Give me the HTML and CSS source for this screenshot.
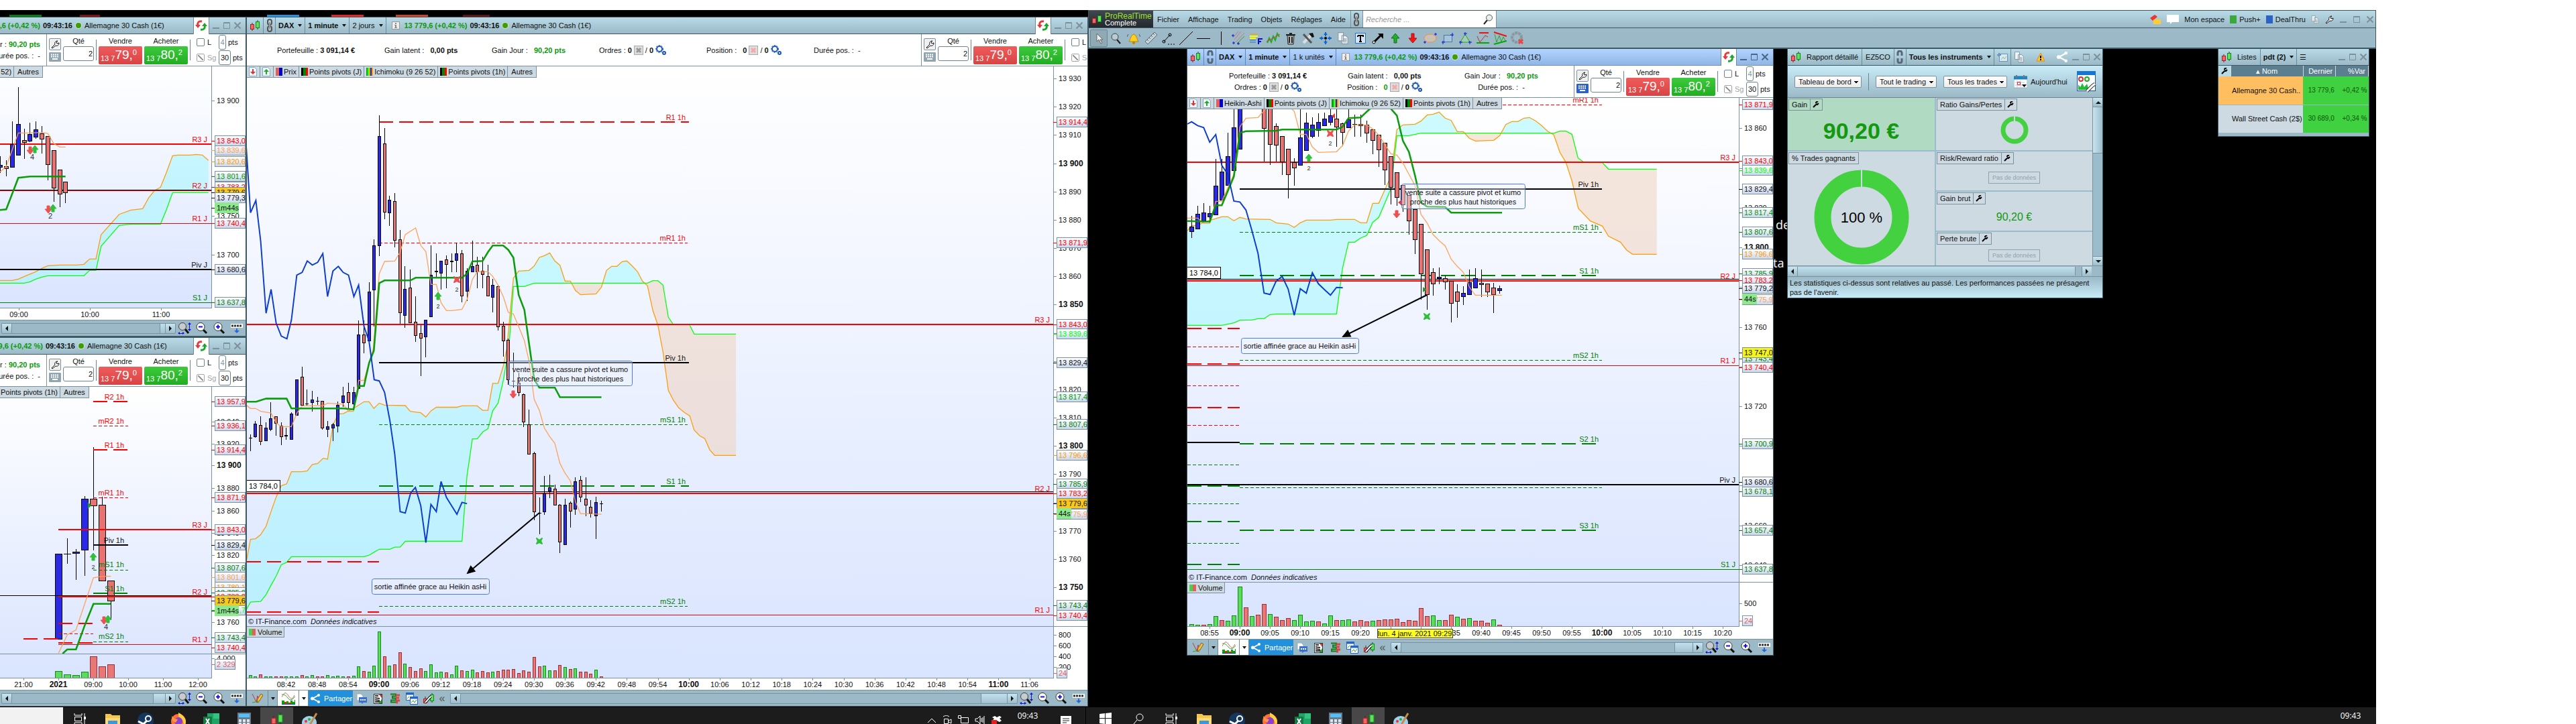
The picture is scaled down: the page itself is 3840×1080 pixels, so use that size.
FILE: index.html
```html
<!DOCTYPE html>
<html lang="fr">
<head>
<meta charset="utf-8">
<title>ProRealTime Complete</title>
<link rel="stylesheet" href="styles.css">
</head>
<body>
<svg class="sprite" aria-hidden="true">
  <symbol id="i-candles" viewBox="0 0 16 16"><path d="M4 4v12M12 0v14" stroke="#333"/><rect x="1.5" y="6.500" width="5" height="7" fill="#e66" stroke="#a22"/><rect x="9.500" y="2.500" width="5" height="9" fill="#5fe05f" stroke="#181"/></symbol>
  <symbol id="i-chain" viewBox="0 0 10 20"><rect x="2" y="1" width="6" height="8" rx="3" fill="none" stroke="#555" stroke-width="2"/><rect x="2" y="11" width="6" height="8" rx="3" fill="none" stroke="#555" stroke-width="2"/><path d="M5 5v10" stroke="#999" stroke-width="2"/></symbol>
  <symbol id="i-unchain" viewBox="0 0 10 20"><path d="M2 8V4a3 3 0 0 1 6 0v4M2 12v4a3 3 0 0 0 6 0v-4" fill="none" stroke="#56677a" stroke-width="3"/></symbol>
  <symbol id="i-info" viewBox="0 0 12 12"><rect x=".5" y=".5" width="11" height="11" fill="#eee" stroke="#999"/><path d="M5 2h2v2H5zM4 5h3v4h1v1H4V9h1V6H4z" fill="#888"/></symbol>
  <symbol id="i-refresh" viewBox="0 0 18 16"><path d="M10 2C5 1 3 4 4 8" fill="none" stroke="#e33b3b" stroke-width="3"/><path d="M0 7h8l-4 5z" fill="#e33b3b"/><path d="M8 14c5 1 7-2 6-6" fill="none" stroke="#1fa62a" stroke-width="3"/><path d="M10 9h8l-4-5z" fill="#1fa62a"/></symbol>
  <symbol id="i-wrench" viewBox="0 0 14 14"><path d="M2 12l5-5c-1-3 1-5 4-5L9 4l1 2 3-1c0 3-2 5-5 4l-5 4z" fill="#fff" stroke="#111"/></symbol>
  <symbol id="i-wrench-s" viewBox="0 0 10 10"><path d="M1 9l4-4M5 3a2 2 0 0 1 3-2M5 4l2 1 2-2" stroke="#000" stroke-width="2" fill="none"/></symbol>
  <symbol id="i-keys" viewBox="0 0 18 14"><rect width="18" height="14" rx="1" fill="currentColor"/><path d="M3 3.500h12M3 6.500h12" stroke="#fff" stroke-width="2" stroke-dasharray="2 1"/><path d="M5 10h8" stroke="#fff" stroke-width="2"/></symbol>
  <symbol id="i-cancel" viewBox="0 0 14 14"><rect x=".5" y=".5" width="13" height="13" fill="#ddd" stroke="#aaa"/><path d="M4 4l6 6M10 4l-6 6" stroke="currentColor" stroke-width="3"/></symbol>
  <symbol id="i-gears" viewBox="0 0 16 16"><circle cx="6" cy="6" r="4" fill="none" stroke="#1c56b8" stroke-width="2"/><circle cx="6" cy="6" r="5.500" fill="none" stroke="#1c56b8" stroke-width="1" stroke-dasharray="2 2"/><circle cx="13" cy="12" r="2" fill="none" stroke="#1c56b8" stroke-width="2"/></symbol>
  <symbol id="i-sheet-dn" viewBox="0 0 12 14"><path d="M.5.500h8l3 3v10H.5z" fill="#eef6fc" stroke="#8ab"/><path d="M5 3h2v4h3l-4 4-4-4h3z" fill="#d33"/></symbol>
  <symbol id="i-sheet-up" viewBox="0 0 12 14"><path d="M.5.500h8l3 3v10H.5z" fill="#eef6fc" stroke="#8ab"/><path d="M5 11h2V7h3L6 3 2 7h3z" fill="#2a2"/></symbol>
  <symbol id="i-pencil" viewBox="0 0 18 16"><path d="M1 1l6 12L9 4l3 8" fill="none" stroke="#c33"/><path d="M1 14l5-1 5 1" stroke="#2a2" fill="none"/><path d="M8 14l1-5 5-8 3 2-5 8z" fill="#f4c542" stroke="#86601a"/></symbol>
  <symbol id="i-waves" viewBox="0 0 20 18"><path d="M0 7c4-8 6-8 10-2s6 5 9-1" fill="none" stroke="#c66"/><path d="M0 3c4 0 6 1 9 5s6 4 11-2" fill="none" stroke="#2a2"/><path d="M0 18v-6h4v2h3v-1h3v2h3v-3h3v2h3v-3h1v9z" fill="#0a0"/><path d="M4 14h3v3H4zM10 15h3v2h-3z" fill="#e22"/><path d="M0 17.500h20" stroke="#22c"/></symbol>
  <symbol id="i-share" viewBox="0 0 14 14"><path d="M12 2L3 7l9 5" fill="none" stroke="#fff" stroke-width="2"/><circle cx="12" cy="2" r="2" fill="#fff"/><circle cx="2.500" cy="7" r="2.500" fill="#fff"/><circle cx="12" cy="12" r="2" fill="#fff"/></symbol>
  <symbol id="i-chat" viewBox="0 0 16 16"><path d="M1 1h6l3 3v7H1z" fill="#fff" stroke="#9ab"/><path d="M4 6h12v8h-5l-3 2v-2H4z" fill="#3a6fd8"/><path d="M6 10h8" stroke="#fff" stroke-width="2" stroke-dasharray="2 1"/></symbol>
  <symbol id="i-news" viewBox="0 0 14 16"><rect x=".5" y="1.500" width="12" height="14" fill="#fff" stroke="#333"/><path d="M2 4h5M2 7l7 1M2 10l7 1M2 13h9" stroke="#333" stroke-width="2"/><path d="M8 2h4v5z" fill="#d33"/><path d="M8 15h4V9z" fill="#2a2"/></symbol>
  <symbol id="i-book" viewBox="0 0 16 16"><path d="M1 1.500h8v3H4v3h5v3H2v3h7" fill="none" stroke="#197d19" stroke-width="2"/><path d="M9 3h6M9 7h5M9 11h6M9 14h3" stroke="#d44" stroke-width="3"/></symbol>
  <symbol id="i-wins" viewBox="0 0 18 18"><rect x=".5" y=".5" width="11" height="11" fill="#fff" stroke="#26c"/><rect x="6.500" y="6.500" width="11" height="11" fill="#fff" stroke="#26c"/><path d="M1 2h10M7 8h10" stroke="#26c" stroke-width="3"/><path d="M2 9l3-3M8 15l3-3 2 3 3-4" stroke="#2a2" fill="none"/></symbol>
  <symbol id="i-candlefix" viewBox="0 0 16 16"><path d="M13 0v14M3 5v11" stroke="#333"/><rect x="10.500" y="2.500" width="5" height="9" fill="#5fe05f" stroke="#181"/><rect x=".5" y="8.500" width="5" height="6" fill="#e66" stroke="#a22"/><path d="M3 14l7-8 2-1" stroke="#000" stroke-width="4"/><path d="M3 14l7-8 2-1" stroke="#fff" stroke-width="2"/></symbol>
  <symbol id="i-fit" viewBox="0 0 20 18"><path d="M11 10l5 6" stroke="#111" stroke-width="3"/><circle cx="7" cy="6" r="5.500" fill="#c8cbd0" stroke="#444"/><path d="M17.500 2v9M1 16.500h8" stroke="#11d" stroke-width="1"/><path d="M15 3l2.500-3L20 3zM15 10l2.500 3 2.500-3zM3 14v4l-3-2zM7 14v4l3-2z" fill="#11d"/></symbol>
  <symbol id="i-out" viewBox="0 0 18 18"><path d="M11 11l5 5" stroke="#111" stroke-width="3"/><circle cx="7" cy="6.500" r="6" fill="#fff" stroke="#333"/><path d="M4 6.500h6" stroke="#11d" stroke-width="2"/></symbol>
  <symbol id="i-in" viewBox="0 0 18 18"><path d="M11 11l5 5" stroke="#111" stroke-width="3"/><circle cx="7" cy="6.500" r="6" fill="#fff" stroke="#333"/><path d="M4 6.500h6M7 3.500v6" stroke="#11d" stroke-width="2"/></symbol>
  <symbol id="i-rows" viewBox="0 0 18 14"><rect width="18" height="6" fill="#fff"/><path d="M1 3h16" stroke="#333" stroke-width="3" stroke-dasharray="3 1"/><path d="M8 7h2v3h3l-4 4-4-4h3z" fill="#2467d6"/></symbol>
  <symbol id="i-min" viewBox="0 0 12 12"><path d="M1 10h10" stroke="currentColor" stroke-width="2"/></symbol>
  <symbol id="i-max" viewBox="0 0 12 12"><path d="M1.500 1.500h9v9h-9zM1 2.500h10" stroke="currentColor" fill="none"/></symbol>
  <symbol id="i-close" viewBox="0 0 12 12"><path d="M1.500 1.500l9 9M10.500 1.500l-9 9" stroke="currentColor" stroke-width="2"/></symbol>
  <symbol id="i-copy" viewBox="0 0 16 18"><path d="M1.500 1.500h7v11h-7zM6.500 5.500h5l3 3v8h-8z" fill="#eef3f5" stroke="#8a9aa4"/><path d="M8 10h5M8 12h5M8 14h5" stroke="#8a9aa4"/></symbol>
  <symbol id="i-search" viewBox="0 0 16 16"><path d="M7 9l-5 6" stroke="#222" stroke-width="2"/><circle cx="10" cy="5.500" r="4.500" fill="#e9eef0" stroke="#555"/></symbol>
  <symbol id="i-folder" viewBox="0 0 24 24"><path d="M1 2h8l2 2h12v18H1z" fill="#f5c64a"/><path d="M1 8h22v15H1z" fill="#fcd975"/><rect x="5" y="12" width="14" height="12" fill="#3a96dd"/></symbol>
  <symbol id="i-steam" viewBox="0 0 24 24"><circle cx="12" cy="12" r="12" fill="#14365f"/><circle cx="16" cy="9" r="4" fill="none" stroke="#fff" stroke-width="2"/><path d="M1 13l8 4 5-5" stroke="#fff" stroke-width="3" fill="none"/></symbol>
  <symbol id="i-fox" viewBox="0 0 24 24"><circle cx="12" cy="13" r="11" fill="#ff7139"/><path d="M12 0c6 3 11 8 11 14a11 11 0 0 1-4 8c2-8-1-13-7-16z" fill="#ffd23e"/><circle cx="12" cy="13" r="6" fill="#8a3fd0"/><path d="M2 5l4 4 5 1-3 5-5-3z" fill="#ff9640"/></symbol>
  <symbol id="i-excel" viewBox="0 0 24 24"><path d="M6 1h18v22H6z" fill="#21a366"/><path d="M15 1h9v8h-9z" fill="#33c481"/><path d="M0 6h13v14H0z" fill="#107c41"/><path d="M4 9l5 8M9 9l-5 8" stroke="#fff" stroke-width="2"/></symbol>
  <symbol id="i-calc" viewBox="0 0 20 26"><rect width="20" height="26" fill="#6d7b8a"/><rect x="2" y="2" width="16" height="5" fill="#4cc2ff"/><path d="M2 12h16M2 17h16M2 22h16" stroke="#dfe6ec" stroke-width="4" stroke-dasharray="4 2"/></symbol>
  <symbol id="i-paint" viewBox="0 0 24 26"><ellipse cx="11" cy="15" rx="11" ry="10" fill="#9fd0ee"/><circle cx="6" cy="13" r="2" fill="#e33"/><circle cx="11" cy="10" r="2" fill="#3a3"/><circle cx="5" cy="18" r="2" fill="#fa3"/><path d="M12 18L22 1" stroke="#c98a4b" stroke-width="3"/></symbol>
  <symbol id="i-taskview" viewBox="0 0 18 18"><path d="M1 1v3h11V1M1.500 6.500h10v6h-10zM1 18v-3h11v3M16 1v17" fill="none" stroke="#fff"/><rect x="15" y="6" width="3" height="4" fill="#fff"/></symbol>
  <symbol id="i-win" viewBox="0 0 18 18"><path d="M0 2l8-1v7H0zM9 1l9-1v8H9zM0 9h8v8l-8-1zM9 9h9v9l-9-1z" fill="#fff"/></symbol>
</svg>

<template id="ticket-template">
  <div class="ticket-tools">
    <button class="tool-btn" type="button" aria-label="Configurer"><svg width="14" height="14"><use href="#i-wrench"/></svg></button>
    <button class="key-btn" type="button" aria-label="Clavier"><svg width="18" height="14"><use href="#i-keys"/></svg></button>
  </div>
  <label class="qty">Qté<input class="field" value="2"></label>
  <span class="rule"></span>
  <div class="deal"><span>Vendre</span><button class="price sell" type="button"><span class="price-lead">13 7</span><span class="price-main">79,</span><span class="price-tick">0</span></button></div>
  <div class="deal"><span>Acheter</span><button class="price buy" type="button"><span class="price-lead">13 7</span><span class="price-main">80,</span><span class="price-tick">2</span></button></div>
  <span class="rule"></span>
  <div class="stops">
    <div class="stop"><label class="stop-name"><input type="checkbox">L</label><label><input class="field narrow" value="4" aria-label="Limite"> pts</label></div>
    <div class="stop"><label class="stop-name off"><input type="checkbox" checked disabled>Sg</label><label><input class="field wide" value="30" aria-label="Stop garanti"> pts</label></div>
  </div>
</template>
<template id="controls-template">
  <span class="sync"><svg width="18" height="16"><use href="#i-refresh"/></svg></span>
  <button class="ctl" type="button" aria-label="Réduire"><svg width="12" height="12"><use href="#i-min"/></svg></button>
  <button class="ctl" type="button" aria-label="Agrandir"><svg width="12" height="12"><use href="#i-max"/></svg></button>
  <button class="ctl" type="button" aria-label="Fermer"><svg width="12" height="12"><use href="#i-close"/></svg></button>
</template>
<template id="tools-template">
  <button class="bar-btn pen" type="button" aria-label="Dessiner"><svg width="18" height="16"><use href="#i-pencil"/></svg></button>
  <button class="bar-btn drop" type="button" aria-label="Outils"><i class="caret"></i></button>
  <button class="bar-btn pen lit" type="button" aria-label="Indicateurs"><svg width="20" height="18"><use href="#i-waves"/></svg></button>
  <button class="bar-btn drop lit" type="button" aria-label="Liste des indicateurs"><i class="caret"></i></button>
  <button class="bar-btn share" type="button"><svg width="14" height="14"><use href="#i-share"/></svg>Partager</button>
  <button class="bar-btn ico" type="button" aria-label="Messages"><svg width="16" height="16"><use href="#i-chat"/></svg></button>
  <button class="bar-btn ico" type="button" aria-label="Actualités"><svg width="14" height="16"><use href="#i-news"/></svg></button>
  <button class="bar-btn ico" type="button" aria-label="Carnet"><svg width="16" height="16"><use href="#i-book"/></svg></button>
  <button class="bar-btn ico" type="button" aria-label="Fenêtres"><svg width="18" height="18"><use href="#i-wins"/></svg></button>
  <button class="bar-btn ico" type="button" aria-label="Style"><svg width="16" height="16"><use href="#i-candlefix"/></svg></button>
  <span class="less">«</span>
</template>
<template id="scroll-template">
  <div class="scroller"><button type="button" class="arrow" aria-label="Gauche"><i class="tri left"></i></button><span class="track"><span class="thumb"></span></span><button type="button" class="arrow" aria-label="Droite"><i class="tri right"></i></button></div>
  <button class="bar-btn ico" type="button" aria-label="Ajuster"><svg width="20" height="18"><use href="#i-fit"/></svg></button>
  <button class="bar-btn ico" type="button" aria-label="Dézoomer"><svg width="18" height="18"><use href="#i-out"/></svg></button>
  <button class="bar-btn ico" type="button" aria-label="Zoomer"><svg width="18" height="18"><use href="#i-in"/></svg></button>
  <button class="bar-btn ico" type="button" aria-label="Lignes"><svg width="18" height="14"><use href="#i-rows"/></svg></button>
</template>

<main class="desktop">
  <div class="under">
    <span class="scrap s1"></span><span class="scrap s2"></span><span class="scrap s3"></span><span class="scrap s4"></span><span class="scrap s5"></span><span class="scrap s6"></span>
    <span class="behind b1">de</span><span class="behind b2">ta</span>
  </div>

  <section class="window chart-a" aria-label="DAX 5 minutes">
    <header class="title"><b class="up">13 779,6 (+0,42 %)</b><b>09:43:16</b><i class="dot"></i><span>Allemagne 30 Cash (1€)</span><span class="controls" data-fill="controls-template"></span></header>
    <div class="trade"><div class="account two short"><p>Gain Jour : <b class="up">90,20 pts</b></p><p>Durée pos. : &nbsp;-</p></div><div class="ticket" data-fill="ticket-template"></div></div>
    <div class="plot"><div class="legend"><span>Ichimoku (9 26 52)</span><span>Autres</span></div><svg id="chart-a" viewBox="-44 99 410 378"></svg></div>
    <footer class="bar" data-fill="scroll-template"></footer>
  </section>

  <section class="window chart-b" aria-label="DAX 15 minutes">
    <header class="title"><b class="up">13 779,6 (+0,42 %)</b><b>09:43:16</b><i class="dot"></i><span>Allemagne 30 Cash (1€)</span><span class="controls" data-fill="controls-template"></span></header>
    <div class="trade"><div class="account two short"><p>Gain Jour : <b class="up">90,20 pts</b></p><p>Durée pos. : &nbsp;-</p></div><div class="ticket" data-fill="ticket-template"></div></div>
    <div class="plot"><div class="legend"><span>Points pivots (1h)</span><span>Autres</span></div><svg id="chart-b" viewBox="-44 577 410 452"></svg></div>
    <footer class="bar" data-fill="scroll-template"></footer>
  </section>

  <section class="window chart-c" aria-label="DAX 1 minute">
    <header class="title">
      <span class="seg icon"><svg width="16" height="16"><use href="#i-candles"/></svg></span><span class="seg link"><svg width="10" height="20"><use href="#i-chain"/></svg></span>
      <button class="seg pick" type="button"><b>DAX</b><i class="caret"></i></button><button class="seg pick" type="button"><b>1 minute</b><i class="caret"></i></button><button class="seg pick" type="button">2 jours<i class="caret"></i></button>
      <svg class="info" width="12" height="12"><use href="#i-info"/></svg><b class="up">13 779,6 (+0,42 %)</b><b>09:43:16</b><i class="dot"></i><span>Allemagne 30 Cash (1€)</span>
      <span class="controls" data-fill="controls-template"></span>
    </header>
    <div class="trade">
      <div class="account one">
        <p>Portefeuille : <b>3 091,14 €</b></p><p>Gain latent : &nbsp;<b>0,00 pts</b></p><p>Gain Jour : &nbsp;<b class="up">90,20 pts</b></p>
        <p>Ordres : <b>0</b><svg class="grey" width="14" height="14"><use href="#i-cancel"/></svg> / <b>0</b><svg width="16" height="16"><use href="#i-gears"/></svg></p>
        <p>Position : &nbsp;<b>0</b><svg class="pale" width="14" height="14"><use href="#i-cancel"/></svg> / <b>0</b><svg width="16" height="16"><use href="#i-gears"/></svg></p>
        <p>Durée pos. : &nbsp;-</p>
      </div>
      <div class="ticket" data-fill="ticket-template"></div>
    </div>
    <div class="plot">
      <div class="legend"><span class="page"><svg width="12" height="14"><use href="#i-sheet-dn"/></svg></span><span class="page"><svg width="12" height="14"><use href="#i-sheet-up"/></svg></span><span><i class="key price-key"></i>Prix</span><span><i class="key pivot-key"></i>Points pivots (J)</span><span><i class="key ichi-key"></i>Ichimoku (9 26 52)</span><span><i class="key pivot-key"></i>Points pivots (1h)</span><span>Autres</span></div>
      <svg id="chart-c" viewBox="368 99 1253 930"></svg>
    </div>
    <footer class="bar"><span class="bar-tools" data-fill="tools-template"></span><span class="bar-scroll" data-fill="scroll-template"></span></footer>
  </section>

  <section class="app" aria-label="ProRealTime">
    <nav class="menubar">
      <div class="brand"><svg width="16" height="16"><use href="#i-candles"/></svg><p><strong>ProRealTime</strong><br>Complete</p></div>
      <a href="#fichier">Fichier</a><a href="#affichage">Affichage</a><a href="#trading">Trading</a><a href="#objets">Objets</a><a href="#reglages">Réglages</a><a href="#aide">Aide</a>
      <span class="chainbox"><svg width="10" height="20"><use href="#i-chain"/></svg></span>
      <label class="search"><input type="search" placeholder="Recherche ..." aria-label="Recherche"><svg width="16" height="16"><use href="#i-search"/></svg></label>
      <div class="menu-right">
        <svg width="18" height="16" viewBox="0 0 18 16"><path d="M1 6l7-5 4 3-7 6z" fill="#e33"/><path d="M6 8h11v7H6z" fill="#fc3"/></svg>
        <svg width="18" height="14" viewBox="0 0 18 14"><path d="M0 0h18v11H8l-3 3v-3H0z" fill="#fff"/></svg>
        <a href="#espace">Mon espace</a>
        <a href="#push"><i class="sq green"></i>Push+</a><a href="#deal"><i class="sq blue"></i>DealThru</a>
        <svg width="12" height="14"><use href="#i-copy"/></svg><svg width="14" height="14"><use href="#i-wrench"/></svg>
        <button class="ctl" type="button" aria-label="Réduire"><svg width="12" height="12"><use href="#i-min"/></svg></button><button class="ctl" type="button" aria-label="Agrandir"><svg width="12" height="12"><use href="#i-max"/></svg></button><button class="ctl" type="button" aria-label="Fermer"><svg width="12" height="12"><use href="#i-close"/></svg></button>
      </div>
    </nav>
    <div class="drawbar">
      <button class="on" type="button" aria-label="Pointeur"><svg viewBox="0 0 20 20"><path d="M7 3v12l3-3 3 6 2-1-3-5h4z" fill="#eee" stroke="#666"/></svg></button>
      <button type="button" aria-label="Loupe"><svg viewBox="0 0 20 20"><path d="M11 12l5 6" stroke="#222" stroke-width="2"/><circle cx="8" cy="8" r="5" fill="#b7cbd3" stroke="#444"/></svg></button>
      <button type="button" aria-label="Alerte"><svg viewBox="0 0 20 20"><path d="M3 15c2-2 2-9 7-11 5 2 5 9 7 11z" fill="#ffcf1f" stroke="#b88600"/><circle cx="10" cy="17" r="2" fill="#b88600"/><path d="M2 4l-2 4M18 4l2 4" stroke="#555"/></svg></button>
      <button type="button" aria-label="Règle"><svg viewBox="0 0 20 20"><path d="M1 15L15 1l4 4L5 19z" fill="#c4d2d8" stroke="#5b6b73"/><path d="M4 12l2 2M7 9l2 2M10 6l2 2M13 3l2 2" stroke="#5b6b73"/></svg></button>
      <button type="button" aria-label="Segment"><svg viewBox="0 0 20 20"><path d="M3 15l9-10" stroke="#000"/><circle cx="3" cy="15" r="2" fill="none" stroke="#000"/><circle cx="12" cy="5" r="2" fill="none" stroke="#000"/><path d="M9 19h10" stroke="#000" stroke-dasharray="2 2"/></svg></button>
      <button type="button" aria-label="Droite"><svg viewBox="0 0 20 20"><path d="M0 20L20 0" stroke="#000"/></svg></button>
      <button type="button" aria-label="Horizontale"><svg viewBox="0 0 20 20"><path d="M0 10.500h20" stroke="#000"/></svg></button>
      <button type="button" aria-label="Verticale"><svg viewBox="0 0 20 20"><path d="M10.500 0v20" stroke="#000"/></svg></button>
      <button type="button" aria-label="Fourchette"><svg viewBox="0 0 20 20"><path d="M4 12L14 0M6 16L19 2M2 9L10 0" stroke="#c77"/><path d="M8 18L19 7" stroke="#2a2"/><path d="M0 6h4M2 4v4M1 17h4M3 15v4M8 18h4M10 16v4" stroke="#11d"/></svg></button>
      <button type="button" aria-label="Fibonacci"><svg viewBox="0 0 20 20"><path d="M1 4h12" stroke="#f90"/><path d="M1 7h12M1 10h9" stroke="#ff0" stroke-width="2"/><path d="M1 13h9M1 16h9" stroke="#27c"/><path d="M14 19V11h6M14 15h4" fill="none" stroke="#11d" stroke-width="2"/></svg></button>
      <button type="button" aria-label="Zigzag"><svg viewBox="0 0 20 20"><path d="M1 17l3-7 3 6 3-9 3 6 3-10 3 5" fill="none" stroke="#2a2" stroke-width="2"/><path d="M0 15L20 4" stroke="#c44"/></svg></button>
      <button type="button" aria-label="Supprimer"><svg viewBox="0 0 20 20"><path d="M5 6h10l-1 13H6z" fill="#bbb" stroke="#222"/><path d="M3 5h14M8 3h4M8 8v9M12 8v9" stroke="#222" stroke-width="2"/></svg></button>
      <button type="button" aria-label="Outils"><svg viewBox="0 0 20 20"><path d="M3 17L15 5" stroke="#ddd" stroke-width="4"/><path d="M3 4l12 13" stroke="#555" stroke-width="3"/><path d="M11 3l6-1 2 6-3 1z" fill="#111"/></svg></button>
      <button type="button" aria-label="Déplacer"><svg viewBox="0 0 20 20"><path d="M10 1v18M1 10h18" stroke="#16c" stroke-width="2" stroke-dasharray="6 6"/><path d="M7 5l3-4 3 4zM7 15l3 4 3-4zM5 7l-4 3 4 3zM15 7l4 3-4 3z" fill="#16c"/><circle cx="10" cy="10" r="2" fill="#000"/></svg></button>
      <button type="button" aria-label="Copier"><svg viewBox="0 0 20 20"><use href="#i-copy" width="20" height="20"/></svg></button>
      <button type="button" aria-label="Texte"><svg viewBox="0 0 20 20"><rect x="2.500" y="2.500" width="15" height="15" fill="#d7e6f6" stroke="#27c"/><path d="M6 6h8v2M6 8V6M10 6v9M8 15h4" stroke="#000" stroke-width="2" fill="none"/></svg></button>
      <button type="button" aria-label="Flèche"><svg viewBox="0 0 20 20"><path d="M5 15L15 5" stroke="#000" stroke-width="3"/><path d="M10 3h8v8z"/><circle cx="4" cy="16" r="2" fill="#fff" stroke="#000"/></svg></button>
      <button type="button" aria-label="Haut"><svg viewBox="0 0 20 20"><path d="M10 3l6 7h-4v7H8v-7H4z" fill="#1fb02a" stroke="#117018"/></svg></button>
      <button type="button" aria-label="Bas"><svg viewBox="0 0 20 20"><path d="M10 17l6-7h-4V3H8v7H4z" fill="#f11" stroke="#a11"/></svg></button>
      <button type="button" aria-label="Ellipse"><svg viewBox="0 0 20 20"><ellipse cx="10" cy="10" rx="9" ry="6" fill="#c9c0b6" stroke="#f84"/><path d="M0 16h4M2 14v4M16 4h4M18 2v4" stroke="#11d"/></svg></button>
      <button type="button" aria-label="Rectangle"><svg viewBox="0 0 20 20"><rect x="4.500" y="5.500" width="12" height="10" fill="#a7c4dc" stroke="#47a"/><path d="M1 16h5M3 14v5M14 5h5M17 2v5" stroke="#11d"/></svg></button>
      <button type="button" aria-label="Triangle"><svg viewBox="0 0 20 20"><path d="M10 4l7 12H3z" fill="#a4cdb4" stroke="#2a2"/><path d="M8 3h5M10 1v5M1 16h5M3 14v5M15 16h5M17 14v5" stroke="#11d"/></svg></button>
      <button type="button" aria-label="Supports"><svg viewBox="0 0 20 20"><path d="M5 2h14" stroke="#e11" stroke-width="2"/><path d="M1 17h19" stroke="#0a0" stroke-width="2"/><path d="M2 7l4 9 8-10 4 2" fill="none" stroke="#b33"/></svg></button>
      <button type="button" aria-label="Canal"><svg viewBox="0 0 20 20"><path d="M1 1l19 6" stroke="#e11" stroke-width="2"/><path d="M1 19l19-5" stroke="#0a0" stroke-width="2"/><path d="M2 4l3 12 4-10 3 9 3-7 3 6" fill="none" stroke="#2a2"/></svg></button>
      <button type="button" aria-label="Effacer le cercle"><svg viewBox="0 0 20 20"><circle cx="9" cy="9" r="7" fill="none" stroke="#8b979e" stroke-width="4" stroke-dasharray="4 1"/><path d="M12 12l6 6M18 12l-6 6" stroke="#e44" stroke-width="3"/></svg></button>
    </div>
  </section>

  <section class="window chart-d active" aria-label="DAX Heikin-Ashi">
    <header class="title">
      <span class="seg icon"><svg width="16" height="16"><use href="#i-candles"/></svg></span><span class="seg link"><svg width="10" height="20"><use href="#i-unchain"/></svg></span>
      <button class="seg pick" type="button"><b>DAX</b><i class="caret"></i></button><button class="seg pick" type="button"><b>1 minute</b><i class="caret"></i></button><button class="seg pick" type="button">1 k unités<i class="caret"></i></button>
      <svg class="info" width="12" height="12"><use href="#i-info"/></svg><b class="up">13 779,6 (+0,42 %)</b><b>09:43:16</b><i class="dot"></i><span>Allemagne 30 Cash (1€)</span>
      <span class="controls" data-fill="controls-template"></span>
    </header>
    <div class="trade">
      <div class="account two">
        <p>Portefeuille : <b>3 091,14 €</b></p><p>Gain latent : &nbsp;<b>0,00 pts</b></p><p>Gain Jour : &nbsp;<b class="up">90,20 pts</b></p>
        <p>Ordres : <b>0</b><svg class="grey" width="14" height="14"><use href="#i-cancel"/></svg> / <b>0</b><svg width="16" height="16"><use href="#i-gears"/></svg></p>
        <p>Position : &nbsp;<b class="up">0</b><svg class="pale" width="14" height="14"><use href="#i-cancel"/></svg> / <b>0</b><svg width="16" height="16"><use href="#i-gears"/></svg></p>
        <p>Durée pos. : &nbsp;-</p>
      </div>
      <div class="ticket" data-fill="ticket-template"></div>
    </div>
    <div class="plot">
      <div class="legend"><span class="page"><svg width="12" height="14"><use href="#i-sheet-dn"/></svg></span><span class="page"><svg width="12" height="14"><use href="#i-sheet-up"/></svg></span><span><i class="key price-key"></i>Heikin-Ashi</span><span><i class="key pivot-key"></i>Points pivots (J)</span><span><i class="key ichi-key"></i>Ichimoku (9 26 52)</span><span><i class="key pivot-key"></i>Points pivots (1h)</span><span>Autres</span></div>
      <svg id="chart-d" viewBox="1770 146 873 807"></svg>
    </div>
    <footer class="bar"><span class="bar-tools" data-fill="tools-template"></span><span class="bar-scroll" data-fill="scroll-template"></span></footer>
  </section>

  <section class="window report" aria-label="Rapport détaillé">
    <header class="title">
      <span class="seg named"><svg width="16" height="16"><use href="#i-candles"/></svg>Rapport détaillé</span><span class="seg acct">EZ5CO</span><span class="seg link"><svg width="10" height="20"><use href="#i-unchain"/></svg></span>
      <button class="seg pick" type="button"><b>Tous les instruments</b><i class="caret"></i></button>
      <span class="seg icon"><svg width="16" height="14" viewBox="0 0 16 14"><rect x="3.500" y="2.500" width="12" height="11" fill="#dbe9f3" stroke="#6a94c0"/><path d="M0 4h6M3 1v6" stroke="#6a94c0" stroke-width="2"/><path d="M6 11l3-4 2 3 3-4" fill="none" stroke="#9b8"/></svg></span>
      <span class="title-icons"><svg width="16" height="18"><use href="#i-copy"/></svg><svg width="14" height="14" viewBox="0 0 14 14"><path d="M7 1l6 12H1z" fill="#fc2" stroke="#e80"/><path d="M7 5v4M7 10v2" stroke="#000" stroke-width="2"/></svg><svg width="16" height="16"><use href="#i-share"/></svg></span>
      <button class="ctl" type="button" aria-label="Réduire"><svg width="12" height="12"><use href="#i-min"/></svg></button><button class="ctl" type="button" aria-label="Agrandir"><svg width="12" height="12"><use href="#i-max"/></svg></button><button class="ctl" type="button" aria-label="Fermer"><svg width="12" height="12"><use href="#i-close"/></svg></button>
    </header>
    <div class="filters">
      <select aria-label="Vue"><option>Tableau de bord</option></select><span class="rule"></span>
      <select aria-label="Trading"><option>Tout le trading</option></select>
      <select aria-label="Trades"><option>Tous les trades</option></select>
      <button class="today" type="button"><svg width="20" height="20" viewBox="0 0 20 20"><rect y="2" width="20" height="17" fill="#fff" stroke="#9ab"/><path d="M0 4h20" stroke="#1c84bf" stroke-width="5"/><path d="M4 0v4M15 0v4" stroke="#777" stroke-width="2"/><path d="M2 11h14M2 15h14M5 8v10M10 8v10" stroke="#bcd"/><path d="M5.500 10.500h4v4h-4z" fill="none" stroke="#e22"/><path d="M12 14h7l-3.500 4z"/></svg>Aujourd'hui</button>
      <svg width="30" height="32" viewBox="0 0 30 32"><rect x=".5" y=".5" width="27" height="29" fill="#fff" stroke="#15b"/><path d="M0 3h28" stroke="#1776cf" stroke-width="6"/><circle cx="6" cy="12" r="3" fill="none" stroke="#c33" stroke-width="2"/><circle cx="15" cy="12" r="3" fill="none" stroke="#2a2" stroke-width="2"/><path d="M2 28V20l3 4 3-6 3 6 4-5 3 9z" fill="#2b3"/><path d="M15 30l8-8 4-3" stroke="#333" stroke-width="5"/><path d="M15 30l8-8 4-3" stroke="#fff" stroke-width="3"/></svg>
    </div>
    <div class="cards-row">
      <div class="cards">
        <article class="card gain"><h3>Gain<svg width="10" height="10"><use href="#i-wrench-s"/></svg></h3><strong>90,20 €</strong></article>
        <article class="card"><h3>Ratio Gains/Pertes<svg width="10" height="10"><use href="#i-wrench-s"/></svg></h3><svg class="ring" width="42" height="42" viewBox="0 0 42 42"><circle cx="21" cy="21" r="17" fill="none" stroke="#43d140" stroke-width="7"/><path d="M21 0v8" stroke="#cddae2" stroke-width="2"/></svg></article>
        <article class="card tall"><h3 class="plain">% Trades gagnants</h3><svg class="ring" width="142" height="142" viewBox="0 0 142 142"><circle cx="71" cy="71" r="58" fill="none" stroke="#43d140" stroke-width="25"/><path d="M71 0v26" stroke="#cddae2" stroke-width="2"/><text x="71" y="79" text-anchor="middle">100 %</text></svg></article>
        <article class="card"><h3>Risk/Reward ratio<svg width="10" height="10"><use href="#i-wrench-s"/></svg></h3><span class="none">Pas de données</span></article>
        <article class="card"><h3>Gain brut<svg width="10" height="10"><use href="#i-wrench-s"/></svg></h3><span class="sum">90,20 €</span></article>
        <article class="card"><h3>Perte brute<svg width="10" height="10"><use href="#i-wrench-s"/></svg></h3><span class="none">Pas de données</span></article>
      </div>
      <div class="vscroll"><button type="button" class="arrow" aria-label="Haut"><i class="tri top"></i></button><span class="vthumb"></span><span class="vtrack"></span><button type="button" class="arrow" aria-label="Bas"><i class="tri bottom"></i></button></div>
    </div>
    <div class="hscroll"><button type="button" class="arrow" aria-label="Gauche"><i class="tri left"></i></button><span class="hthumb"></span><span class="htrack"></span><button type="button" class="arrow" aria-label="Droite"><i class="tri right"></i></button></div>
    <p class="notice">Les statistiques ci-dessus sont relatives au passé. Les performances passées ne présagent pas de l'avenir.</p>
  </section>

  <section class="window lists" aria-label="Listes">
    <header class="title"><span class="seg named"><svg width="16" height="16"><use href="#i-candles"/></svg>Listes</span><button class="seg pick" type="button"><b>pdt (2)</b><i class="caret"></i></button><span class="title-icons">☰</span><button class="ctl" type="button" aria-label="Réduire"><svg width="12" height="12"><use href="#i-min"/></svg></button><button class="ctl" type="button" aria-label="Agrandir"><svg width="12" height="12"><use href="#i-max"/></svg></button><button class="ctl" type="button" aria-label="Fermer"><svg width="12" height="12"><use href="#i-close"/></svg></button></header>
    <table class="quotes">
      <thead><tr><th class="cfg"><svg width="10" height="10"><use href="#i-wrench-s"/></svg></th><th>▴ Nom</th><th>Dernier</th><th>%Var</th></tr></thead>
      <tbody><tr class="picked"><td></td><td>Allemagne 30 Cash..</td><td class="num">13 779,6</td><td class="num">+0,42 %</td></tr><tr><td></td><td>Wall Street Cash (2$)</td><td class="num">30 689,0</td><td class="num">+0,34 %</td></tr></tbody>
    </table>
  </section>

  <footer class="taskbar left-bar">
    <span class="find"></span>
    <span class="app-ico"><svg width="18" height="18"><use href="#i-taskview"/></svg></span><span class="app-ico"><svg width="24" height="24"><use href="#i-folder"/></svg></span><span class="app-ico"><svg width="24" height="24"><use href="#i-steam"/></svg></span><span class="app-ico"><svg width="24" height="24"><use href="#i-fox"/></svg></span><span class="app-ico"><svg width="24" height="24"><use href="#i-excel"/></svg></span><span class="app-ico"><svg width="20" height="26"><use href="#i-calc"/></svg></span><span class="app-ico run"><svg width="20" height="20"><use href="#i-candles"/></svg></span><span class="app-ico"><svg width="24" height="26"><use href="#i-paint"/></svg></span>
    <span class="tray">
      <svg width="14" height="14" viewBox="0 0 14 14"><path d="M1 11l6-6 6 6" fill="none" stroke="#fff"/></svg>
      <svg width="14" height="14" viewBox="0 0 14 14"><path d="M2.500 5.500h6v7h-6zM9 8l4-2v6l-4-2M1 2c3-2 6-2 9 0" fill="none" stroke="#fff"/></svg>
      <svg width="16" height="14" viewBox="0 0 16 14"><path d="M4.500 3.500h11v8h-11zM7 13.500h6M.5.500h4v4h-4z" fill="none" stroke="#fff"/></svg>
      <svg width="16" height="14" viewBox="0 0 16 14"><path d="M1 5h3l4-4v12L4 9H1zM10 4v6M12 3v8M14 1v12" fill="none" stroke="#fff"/></svg>
      <svg width="16" height="14" viewBox="0 0 16 14"><path d="M1 3l4-2 3 2 4-2 3 2-3 2 3 3-3 2-4-2-3 2-4-2 3-3z" fill="#fff"/><rect y="7" width="8" height="7" fill="#d22"/></svg>
    </span>
    <span class="clock">09:43<br>04/01/2021</span>
    <span class="notes"><svg width="18" height="20" viewBox="0 0 18 20"><path d="M1 1h16v14H8l-4 4v-4H1z" fill="#fff"/><path d="M4 5h10M4 8h10M4 11h6" stroke="#222"/></svg></span>
  </footer>
  <footer class="taskbar right-bar">
    <span class="app-ico"><svg width="18" height="18"><use href="#i-win"/></svg></span><span class="app-ico"><svg width="18" height="18" viewBox="0 0 18 18"><circle cx="11" cy="7" r="5" fill="none" stroke="#fff"/><path d="M7 11l-5 6" stroke="#fff"/></svg></span><span class="app-ico"><svg width="18" height="18"><use href="#i-taskview"/></svg></span><span class="app-ico"><svg width="24" height="24"><use href="#i-folder"/></svg></span><span class="app-ico"><svg width="24" height="24"><use href="#i-steam"/></svg></span><span class="app-ico"><svg width="24" height="24"><use href="#i-fox"/></svg></span><span class="app-ico"><svg width="24" height="24"><use href="#i-excel"/></svg></span><span class="app-ico"><svg width="20" height="26"><use href="#i-calc"/></svg></span><span class="app-ico run"><svg width="20" height="20"><use href="#i-candles"/></svg></span><span class="app-ico"><svg width="24" height="26"><use href="#i-paint"/></svg></span>
    <span class="clock">09:43<br>04/01/2021</span>
  </footer>
</main>
<script src="charts.js"></script>
</body>
</html>
```
FILE: styles.css
```css
* { box-sizing: border-box; }
body { margin: 0; background: #fff; color: #111; font: 11px/14px "Liberation Sans", Arial, sans-serif; }
button, input, select { font: inherit; color: inherit; margin: 0; padding: 0; }
button { background: none; border: 0; }
p, h3 { margin: 0; }
a { color: inherit; text-decoration: none; }
svg { display: block; flex: none; }
.sprite { position: absolute; width: 0; height: 0; }
.up { color: #0c990c; }

.desktop { position: relative; height: 100vh; overflow: hidden; }
.under { position: absolute; top: 15px; left: 0; width: 3542px; bottom: 0; background: #000; }
.scrap { position: absolute; top: 7px; height: 3px; }
.s1 { left: 14px; width: 48px; background: #0a7a1a; }
.s2 { left: 119px; width: 30px; background: #7c1515; }
.s3 { left: 398px; width: 48px; background: #2f8fd8; }
.s4 { left: 494px; width: 48px; background: #e02828; }
.s5 { left: 590px; width: 48px; background: #c8452c; }
.s6 { left: 690px; width: 40px; background: #5c1515; }
.behind { position: absolute; color: #eee; font: 18px/20px "Noto Sans", sans-serif; }
.b1 { left: 2647px; top: 310px; }
.b2 { left: 2643px; top: 367px; }

/* windows */
.window { position: absolute; display: flex; flex-direction: column; overflow: hidden; background: #fff; border: 1px solid #3f5964; }
.chart-a { left: -44px; top: 25px; width: 410px; height: 477px; border-width: 1px 0; --thumb: 8px; }
.chart-b { left: -44px; top: 502px; width: 410px; height: 552px; border-width: 2px 0 1px; --thumb: 18px; }
.chart-c { left: 366px; top: 25px; width: 1256px; height: 1029px; border-left-width: 2px; --thumb: 39px; }
.chart-d { left: 1769px; top: 72px; width: 875px; height: 906px; --thumb: 27px; }
.report { left: 2664px; top: 72px; width: 471px; height: 373px; }
.lists { left: 3306px; top: 72px; width: 226px; height: 132px; background: #9bb9c6; }

.title { flex: none; display: flex; align-items: center; height: 25px; white-space: nowrap; background: linear-gradient(#b8dae6, #9bb9c6); border-bottom: 1px solid #3f5964; }
.active .title { background: linear-gradient(#b4d4ff, #8fb6e6); border-bottom-color: #6d8fb4; }
.title b + b { margin-left: 4px; }
.chart-a > .title { padding-left: 10px; }
.chart-b > .title { padding-left: 14px; }
.dot { width: 8px; height: 8px; margin: 0 5px 0 5px; border-radius: 50%; background: #3f9c06; box-shadow: 0 0 0 1px #d5e8c8; }
.seg { display: flex; align-items: center; height: 24px; border-right: 1px solid #6d8a98; }
.active .seg { border-right-color: #5f85b8; }
.seg.icon { width: 25px; justify-content: center; }
.seg.link { width: 18px; justify-content: center; }
.seg.pick { padding: 0 4px; gap: 6px; }
.seg.pick b { margin: 0; }
.seg.named { gap: 8px; padding: 0 5px 0 4px; }
.seg.acct { padding: 0 5px; }
.info { margin: 0 7px 0 8px; }
.caret { width: 0; height: 0; border: 3px solid transparent; border-top: 4px solid #111; border-bottom: 0; }
.controls { display: flex; align-items: center; margin-left: auto; padding-right: 4px; height: 25px; }
.sync { display: grid; place-items: center; width: 24px; height: 25px; margin-right: 2px; background: #fff; border-left: 1px solid #6d8a98; border-right: 1px solid #6d8a98; }
.ctl { width: 16px; height: 16px; padding: 2px; color: #7d8f99; }
.active .ctl { color: #4a6588; }
.title-icons { display: flex; align-items: center; justify-content: space-between; gap: 8px; flex: 1; padding: 0 4px; }

.trade { flex: none; display: flex; height: 48px; background: #fff; border-bottom: 1px solid #7b919d; }
.account { flex: 1; display: grid; align-content: center; }
.account.one { grid-template-columns: repeat(6, 160px); padding-left: 45px; }
.account.two { grid-template-columns: repeat(3, 174px); grid-auto-rows: 17px; padding-left: 33px; justify-items: center; }
.account.short { grid-template-columns: 104px; padding: 0; justify-items: end; }
.account p { display: flex; align-items: center; gap: 3px; white-space: nowrap; }
.grey { color: #999; }
.pale { color: #f6a8a8; }
.ticket { flex: none; display: flex; align-items: center; gap: 3px; width: 297px; padding-left: 3px; border-left: 1px solid #7b919d; }
.ticket-tools { display: flex; flex-direction: column; gap: 3px; }
.tool-btn { display: grid; place-items: center; width: 18px; height: 18px; background: #f0f0f0; border: 1px solid #7b919d; border-radius: 2px; }
.key-btn { height: 14px; color: #91a5b0; }
.active .key-btn { color: #2c62c6; }
.qty, .deal { display: flex; flex-direction: column; align-items: center; gap: 1px; height: 42px; }
.field { height: 22px; border: 1px solid #6d8592; border-radius: 3px; background: #fff; text-align: right; }
.qty .field { width: 46px; padding-right: 1px; }
.rule { width: 1px; height: 31px; background: #6d8592; }
.price { display: flex; align-items: center; width: 65px; height: 28px; padding-left: 3px; color: #fff; border-radius: 2px; }
.sell { background: linear-gradient(#f05c5c, #d84444); }
.buy { background: linear-gradient(#3cca3c, #22ac22); }
.price-lead { align-self: flex-end; line-height: 18px; }
.price-main { font-size: 19px; line-height: 26px; }
.price-tick { align-self: flex-start; line-height: 18px; }
.stops { display: flex; flex-direction: column; gap: 1px; padding-left: 6px; }
.stop, .stop label { display: flex; align-items: center; }
.stop label { gap: 3px; }
.stop .stop-name { width: 33px; gap: 4px; }
.stop .field { text-align: center; }
.field.narrow { width: 11px; color: #7d98a8; }
.field.wide { width: 18px; }
.off { color: #a5a5a5; }
.stop input[type="checkbox"] { appearance: none; width: 12px; height: 12px; border: 1px solid #6d8592; border-radius: 2px; }
.stop input:checked { border-color: #a5a5a5; background: linear-gradient(45deg, transparent 40%, #999 40%, #999 60%, transparent 60%) center / 8px 8px no-repeat; }

.plot { position: relative; flex: 1; min-height: 0; }
.plot > svg { width: 100%; height: 100%; }
.legend { position: absolute; top: 0; left: 0; display: flex; height: 17px; line-height: 16px; white-space: nowrap; }
.legend span { display: flex; align-items: center; gap: 2px; padding: 0 3px; background: #cddae2; border-right: 1px solid #7b919d; border-bottom: 1px solid #7b919d; }
.legend .page { padding: 0 4px 0 3px; }
.legend span:last-child { padding: 0 5px; }
.chart-a .legend { left: -33px; }
.chart-b .legend { left: 42px; }
.key { width: 10px; height: 12px; }
.price-key { background: linear-gradient(90deg, #e06060 50%, #0000cc 50%); }
.pivot-key { background: linear-gradient(90deg, #000 33%, #080 33%, #080 66%, #f00 66%); }
.ichi-key { background: linear-gradient(90deg, #0a0 25%, #3f3 25%, #3f3 45%, #f90 45%, #f90 60%, #03c 60%, #03c 80%, #f90 80%); }

.bar { flex: none; display: flex; align-items: center; height: 24px; background: #9bb9c6; border-top: 1px solid #7b919d; }
.chart-a .bar, .chart-b .bar { padding-left: 46px; }
.bar-tools { display: flex; align-items: center; height: 23px; padding-right: 4px; }
.bar-scroll { flex: 1; display: flex; align-items: center; }
.bar-btn { display: grid; place-items: center; width: 25px; height: 23px; }
.scroller ~ .bar-btn { width: 26px; }
.bar-btn.pen { width: 31px; }
.bar-btn.drop { width: 15px; border-left: 1px solid #6d8a98; border-right: 1px solid #6d8a98; }
.bar-btn.lit { background: #fff; }
.bar-btn.share { display: flex; align-items: center; gap: 6px; width: 66px; padding-left: 3px; background: #2390dc; color: #fff; }
.less { width: 16px; text-align: center; color: #555; font-size: 16px; }
.scroller { flex: 1; display: flex; height: 16px; border: 1px solid #7b919d; border-radius: 1px; }
.arrow { display: grid; place-items: center; flex: none; width: 15px; height: 14px; background: linear-gradient(#c9e6f1, #9bbdca); border: 0 solid #7b919d; border-right-width: 1px; }
.arrow:last-child { border-width: 0 0 0 1px; }
.track { flex: 1; display: flex; justify-content: flex-end; }
.thumb { width: var(--thumb); background: linear-gradient(#bfe0ec, #a2c2d0); border-left: 1px solid #7b919d; }
.tri { width: 0; height: 0; border: 4px solid transparent; }
.tri.left { border-right-color: #111; border-left: 0; }
.tri.right { border-left-color: #111; border-right: 0; }
.tri.top { border-bottom-color: #111; border-top: 0; }
.tri.bottom { border-top-color: #111; border-bottom: 0; }

/* main application bar */
.app { position: absolute; left: 1622px; top: 15px; width: 1920px; border: 1px solid #3f5964; border-bottom-width: 2px; }
.menubar { display: flex; align-items: center; height: 25px; background: linear-gradient(#b8dae6, #9bb9c6); }
.menubar > a { padding: 0 7px 0 6px; }
.brand { display: flex; align-items: center; gap: 4px; width: 96px; height: 25px; padding-left: 4px; background: linear-gradient(#40474e, #22282d); color: #fff; line-height: 10px; }
.brand strong { color: #9be22d; font-size: 12px; font-weight: normal; }
.chainbox { display: grid; place-items: center; width: 19px; height: 25px; border: 1px solid #7b919d; border-width: 0 1px; }
.search { display: flex; align-items: center; width: 199px; height: 25px; padding: 0 4px; background: #fff; border-right: 1px solid #7b919d; }
.search input { flex: 1; border: 0; outline: 0; background: none; font-style: italic; }
.search input::placeholder { color: #9a9a9a; }
.menu-right { display: flex; align-items: center; gap: 8px; margin-left: auto; padding-right: 2px; }
.menu-right a { display: flex; align-items: center; gap: 4px; }
.menu-right .ctl { width: 12px; padding: 0; }
.sq { width: 10px; height: 12px; }
.sq.green { background: #3aa83a; }
.sq.blue { background: #2c62c6; }
.drawbar { display: flex; align-items: center; height: 30px; padding-left: 2px; background: #9bb9c6; border-top: 1px solid #3f5964; }
.drawbar button { display: grid; place-items: center; width: 26px; height: 26px; }
.drawbar svg { width: 20px; height: 20px; }
.drawbar .on { background: #8fa9b5; border: 1px solid #6d8592; border-radius: 2px; }

/* report */
.filters { flex: none; display: flex; align-items: center; gap: 10px; height: 48px; padding: 0 8px 0 10px; background: linear-gradient(#c9ebf8, #9bb9c6); border-bottom: 1px solid #6d8592; }
.filters .rule { height: 26px; }
.filters select { appearance: none; height: 18px; padding: 0 14px 0 5px; border: 1px solid #7b919d; border-radius: 2px; background: linear-gradient(#111, #111) right 4px top 7px / 6px 1px no-repeat, linear-gradient(#111, #111) right 5px top 8px / 4px 1px no-repeat, linear-gradient(#111, #111) right 6px top 9px / 2px 1px no-repeat, linear-gradient(#fff, #ececec); }
.today { display: flex; align-items: center; gap: 5px; flex: 1; }
.cards-row { flex: 1; display: flex; min-height: 0; background: #9bbccb; }
.cards { flex: 1; display: grid; grid-template-columns: 219px 1fr; grid-template-rows: 78px 58px 58px 50px; gap: 2px; }
.card { position: relative; display: grid; place-items: center; background: #cddae2; overflow: hidden; }
.card.gain { background: #b0dac2; }
.card.tall { grid-row: span 3; }
.card h3 { position: absolute; left: 1px; top: 1px; display: flex; align-items: center; gap: 4px; height: 18px; padding: 0 4px; border: 1px solid #7b919d; font-size: 11px; font-weight: normal; }
.card h3 svg { box-sizing: content-box; padding: 3px 0 3px 3px; border-left: 1px solid #7b919d; }
.card.gain strong { padding-top: 20px; font-size: 34px; line-height: 40px; color: #12990f; }
.card .ring { margin-top: 18px; }
.card.tall .ring { margin-top: 26px; }
.ring text { font-size: 22px; }
.none { margin-top: 20px; padding: 1px 5px; border: 1px solid #8fa3ae; font-size: 9px; color: #8fa3ae; }
.sum { margin-top: 18px; font-size: 16px; color: #12990f; }
.vscroll { display: flex; flex-direction: column; width: 15px; border-left: 1px solid #7b919d; }
.vscroll .arrow { border-width: 0 0 1px; }
.vscroll .arrow:last-child { border-width: 1px 0 0; }
.vthumb { height: 69px; background: linear-gradient(90deg, #c9e6f1, #9bbdca); border-bottom: 1px solid #7b919d; }
.vtrack { flex: 1; }
.hscroll { flex: none; display: flex; height: 17px; padding: 1px 16px 1px 0; background: #9bb9c6; border-top: 1px solid #7b919d; border-bottom: 1px solid #7b919d; }
.hthumb { flex: 1; background: linear-gradient(#bfe0ec, #a2c2d0); border-right: 1px solid #7b919d; }
.htrack { width: 9px; }
.notice { flex: none; height: 31px; padding: 2px 3px; background: linear-gradient(#9bb9c6, #c9ebf8); }

/* lists */
.quotes { border-collapse: collapse; width: 100%; background: #cddae2; table-layout: fixed; font-size: 11px; }
.quotes th { height: 16px; padding: 0 4px; font-weight: normal; text-align: right; color: #fff; background: #5b7f8e; border-right: 1px solid #cddae2; }
.quotes .cfg { width: 18px; background: #b8dae6; }
.quotes th:nth-child(2) { width: 108px; text-align: center; }
.quotes td { height: 42px; padding: 0 2px; white-space: nowrap; overflow: hidden; }
.quotes tr + tr td { border-top: 1px solid #9bb9c6; }
.picked td { background: #ffbf60; }
.quotes td.num { background: #3fd13f; color: #0a5a0a; text-align: right; font-size: 10px; }

/* taskbars */
.taskbar { position: absolute; top: 1055px; bottom: 0; display: flex; background: #1c1c1c; color: #fff; overflow: hidden; }
.left-bar { left: 0; width: 1618px; }
.right-bar { left: 1619px; width: 1923px; padding-left: 4px; }
.find { width: 94px; background: #f2f2f2; }
.app-ico { display: flex; justify-content: center; width: 49px; height: 30px; padding-top: 8px; }
.app-ico.run { background: #484848; }
.tray { display: flex; gap: 9px; margin-left: auto; padding-top: 12px; }
.clock { width: 76px; padding-top: 4px; text-align: center; font: 12px/18px "Open Sans", sans-serif; }
.right-bar .clock { margin-left: auto; }
.notes { width: 48px; padding: 12px 0 0 10px; }
```
FILE: charts.js
```js
const NS = "http://www.w3.org/2000/svg";

document.querySelectorAll("[data-fill]").forEach(host => {
  host.append(document.getElementById(host.dataset.fill).content.cloneNode(true));
});

function el(parent, tag, attrs, text) {
  const node = document.createElementNS(NS, tag);
  for (const k in attrs) node.setAttribute(k, attrs[k]);
  if (text !== undefined) node.textContent = text;
  parent.append(node);
  return node;
}
// A frame turns digitised units into plot pixels.
const frame = (ox, oy, kx, ky) => ({ x: v => ox + v / kx, y: v => oy + v / ky });
const points = (f, str) => str.trim().split(/\s+/).map(p => { const [x, y] = p.split(",").map(Number); return [f.x(x), f.y(y)]; });
const join = pts => pts.map(p => p.map(v => v.toFixed(1)).join(",")).join(" ");

const RED = "#ff0000", GREEN = "#008000", BLACK = "#000000", ORANGE = "#ff9900", PEACH = "#ff9f50", LIME = "#00ff00", KIJUN = "#009900";

function makeChart(id, o) {
  const svg = document.getElementById(id);
  const defs = el(svg, "defs", {});
  const sky = el(defs, "linearGradient", { id: id + "-sky", x1: 0, y1: 0, x2: 0, y2: 1 });
  el(sky, "stop", { offset: 0, "stop-color": "#ffffff" });
  el(sky, "stop", { offset: 1, "stop-color": "#d9e4ff" });
  const tag = el(defs, "linearGradient", { id: id + "-tag", x1: 0, y1: 0, x2: 0, y2: 1 });
  el(tag, "stop", { offset: 0, "stop-color": "#ffffff" });
  el(tag, "stop", { offset: 1, "stop-color": "#c8d6ee" });
  const clip = el(defs, "clipPath", { id: id + "-clip" });
  el(clip, "rect", { x: o.left, y: o.top, width: o.right - o.left, height: (o.split || o.bottom) - o.top });
  el(svg, "rect", { x: o.left, y: o.top, width: o.edge - o.left + 2, height: o.bottom - o.top + 30, fill: "#fff" });
  el(svg, "rect", { x: o.left, y: o.top, width: o.right - o.left, height: o.bottom - o.top, fill: `url(#${id}-sky)` });
  const g = el(svg, "g", { "clip-path": `url(#${id}-clip)` });
  const crisp = { "shape-rendering": "crispEdges" };

  const api = {
    g, svg,
    cloud(a, b, down) {
      const poly = join(a.concat([...b].reverse()));
      const draw = (name, ranges, fill) => {
        const c = el(defs, "clipPath", { id: `${id}-${name}` });
        ranges.forEach(([x1, x2]) => el(c, "rect", { x: x1, y: 0, width: x2 - x1, height: 1100 }));
        el(g, "polygon", { points: poly, fill, "clip-path": `url(#${id}-${name})` });
      };
      const ups = []; let at = o.left - 50;
      down.forEach(([x1, x2]) => { ups.push([at, x1]); at = x2; });
      ups.push([at, at + 2000]);
      draw("rise", ups, "rgba(155,248,255,.5)");
      if (down.length) draw("fall", down, "rgba(240,208,186,.5)");
      api.line(a, ORANGE, 1); api.line(b, LIME, 1);
    },
    line(pts, color, w) { el(g, "polyline", { points: join(pts), fill: "none", stroke: color, "stroke-width": w * 1.3, opacity: .95 }); },
    level(x1, x2, y, color, w, dash) {
      el(g, "line", { x1, x2, y1: w === 1 ? Math.round(y) + .5 : Math.round(y), y2: w === 1 ? Math.round(y) + .5 : Math.round(y), stroke: color, "stroke-width": w, "stroke-dasharray": dash || "none", ...crisp });
    },
    label(x, y, s, color, anchor = "end", weight = "normal", parent = g) { el(parent, "text", { x, y, fill: color, "text-anchor": anchor, "font-weight": weight }, s); },
    candle(x, h, t, b, l, c, w) {
      x = Math.round(x); h = Math.round(h); l = Math.round(l); t = Math.round(t); b = Math.max(Math.round(b), t + 1);
      el(g, "rect", { x, y: Math.min(h, t), width: 1, height: Math.max(l, b) - Math.min(h, t), fill: "#000", ...crisp });
      if (c === "d") el(g, "rect", { x: x - (w - 1) / 2, y: t, width: w, height: 1, fill: "#000", ...crisp });
      else el(g, "rect", { x: x - (w - 1) / 2 + .5, y: t + .5, width: w - 1, height: b - t, fill: c === "b" ? "#2a2ae6" : "#e87272", stroke: "#000", ...crisp });
    },
    bar(x, h, base, c, w) {
      h = Math.max(2, Math.round(h));
      el(svg, "rect", { x: Math.round(x) - (w - 1) / 2 + .5, y: base - h + .5, width: w - 1, height: h, fill: c === "g" ? "#5bdc5b" : "#e87878", stroke: c === "g" ? "#118a11" : "#a02c2c", ...crisp });
    },
    mark(kind, x, y, n) {
      const d = { up: "M0-6l5 6H2v5h-4V0h-3z", down: "M0 6l5-6H2v-5h-4V0h-3z", x: "M-4-4l4 3 4-3-2 4 2 4-4-2-4 2 2-4z" }[kind.slice(0, -1)];
      const c = kind.endsWith("g") ? "#2fbf3a" : "#ee5050";
      el(g, "path", { d, transform: `translate(${x} ${y})`, fill: c, stroke: c, "stroke-width": kind[0] === "x" ? 2 : 1, "stroke-linejoin": "round" });
      if (n) el(g, "text", { x, y: y + 18, "text-anchor": "middle", fill: "#333", "font-size": 9 }, n);
    },
    note(x, y, w, h, lines) {
      el(g, "rect", { x: x + .5, y: y + .5, width: w, height: h, rx: 3, fill: "rgba(240,244,255,.4)", stroke: "#4a7ce0" });
      lines.forEach((s, i) => api.label(x + w / 2, y + (lines.length > 1 ? 17 : 16) + i * 14, s, "#111", "middle"));
    },
    arrow(x1, y1, x2, y2) {
      el(g, "line", { x1, y1, x2, y2, stroke: "#000", "stroke-width": 2 });
      const a = Math.atan2(y2 - y1, x2 - x1) * 180 / Math.PI;
      el(g, "path", { d: "M2 0l-13-6v12z", transform: `translate(${x2} ${y2}) rotate(${a})` });
    },
    callout(y, s) {
      el(g, "rect", { x: o.left - .5, y: y + .5, width: 50, height: 17, fill: "#fff", stroke: "#000" });
      api.label(o.left + 3, y + 13, s, "#000", "start");
    },
    tick(y, s, weight) {
      el(svg, "rect", { x: o.right, y: Math.round(y), width: 5, height: 1, fill: "#7b919d" });
      el(svg, "text", { x: o.right + 8, y: Math.round(y) + 4, fill: "#111", "font-weight": weight || "normal", "font-size": weight ? 12 : 11 }, s);
    },
    tag(y, s, color, fill, w) {
      y = Math.round(y);
      el(svg, "rect", { x: o.right, y, width: 5, height: 1, fill: color });
      w = w || o.edge - o.right - 6;
      el(svg, "rect", { x: o.right + 5.5, y: y - 7.5, width: w, height: 15, fill: fill || `url(#${id}-tag)`, stroke: fill === "#8ee88e" ? fill : "#7b919d" });
      el(svg, "text", { x: o.right + 8, y: y + 4, fill: color }, s);
    },
    time(x, s, bold) {
      el(svg, "rect", { x: Math.round(x), y: o.bottom, width: 1, height: 4, fill: "#7b919d" });
      el(svg, "text", { x, y: o.bottom + 14, "text-anchor": "middle", fill: "#111", "font-weight": bold ? "bold" : "normal", "font-size": bold ? 12 : 11 }, s);
    },
    frameLines() {
      el(svg, "rect", { x: o.left, y: o.bottom, width: o.right - o.left, height: 1, fill: "#7b919d" });
      el(svg, "rect", { x: o.right, y: o.top, width: 1, height: o.bottom - o.top + 1, fill: "#7b919d" });
      if (o.split) el(svg, "rect", { x: o.left, y: o.split, width: o.edge - o.left, height: 1, fill: "#7b919d" });
    },
    credits() {
      const t = el(svg, "text", { x: o.left + 2, y: o.split - 3, fill: "#111" });
      t.append("© IT-Finance.com  ");
      el(t, "tspan", { "font-style": "italic", dx: 3 }, "Données indicatives");
      el(svg, "rect", { x: o.left - .5, y: o.split + .5, width: 56, height: 16, fill: "#cddae2", stroke: "#7b919d" });
      el(svg, "rect", { x: o.left + 3, y: o.split + 4, width: 5, height: 10, fill: "#4cd04c" });
      el(svg, "rect", { x: o.left + 8, y: o.split + 4, width: 5, height: 10, fill: "#e06060" });
      api.label(o.left + 16, o.split + 13, "Volume", "#111", "start", "normal", svg);
    }
  };
  return api;
}
const rows = str => str.trim().split(";").map(r => r.trim().split(/\s+/)).filter(r => r.length > 4);

// ---- A: five-minute chart
{
  const c = makeChart("chart-a", { left: -44, top: 99, right: 315, bottom: 459, edge: 366 });
  const f = frame(0, 0, 3, 3);
  c.cloud(points(f, "-60,1255 55,1255 82,1249 109,1237 160,1216 187,1201 214,1189 270,1186 345,1186 375,1183 401,1159 429,1159 452,1050 533,959 586,940 638,934 664,887 691,853 718,838 745,770 772,697 796,694 850,694 878,691 905,694 932,718"),
    points(f, "-60,1267 109,1267 134,1261 160,1249 187,1240 214,1234 375,1234 401,1210 429,1210 452,1102 533,1009 586,1003 718,1003 745,937 772,862 932,862"), []);
  c.level(-44, 315, 215, RED, 2); c.level(-44, 315, 284, RED, 2); c.level(-44, 315, 283, BLACK, 1);
  c.level(-44, 315, 333, RED, 1); c.level(-44, 315, 402, BLACK, 2); c.level(-44, 315, 451, GREEN, 1);
  rows(`2 700 739 751 775 b;28 718 745 757 788 r;55 543 646 751 751 b;82 390 556 697 697 b;109 576 628 640 711 r;134 549 601 634 637 b;160 543 580 616 620 b;187 564 598 625 686 r;214 609 610 737 806 r;241 672 673 844 902 r;268 759 760 871 926 r;292 813 814 865 908 r`)
    .forEach(([x, h, t, b, l, k]) => c.candle(f.x(+x) - .3, f.y(+h), f.y(+t), f.y(+b) - 1, f.y(+l), k, 7));
  c.line(points(f, "0,770 28,745 55,670 82,595 130,595 190,593 214,597 241,643 268,658 293,658"), PEACH, 1);
  c.line(points(f, "0,940 28,937 82,796 134,790 293,790"), KIJUN, 2);
  c.mark("downr", 45, 224); c.mark("upg", 52, 223); c.label(48, 238, "4", "#333", "middle");
  c.mark("downr", 72, 312); c.mark("upg", 79, 311); c.label(75, 326, "2", "#333", "middle");
  [["R3 J", 212, RED], ["R2 J", 281, RED], ["R1 J", 330, RED], ["Piv J", 399, "#111"], ["S1 J", 448, GREEN]].forEach(([s, y, k]) => c.label(309, y, s, k));
  c.frameLines();
  c.tick(150, "13 900"); c.tick(322, "13 750"); c.tick(380, "13 700");
  c.tag(224, "13 839,6", PEACH); c.tag(210, "13 843,0", RED); c.tag(241, "13 820,6", ORANGE); c.tag(263, "13 801,6", KIJUN);
  c.tag(279, "13 783,2", RED); c.tag(287, "13 779,6", "#111", "#f8c81c"); c.tag(295, "13 779,3", "#111"); c.tag(310, "1m44s", "#111", "#8ee88e", 35);
  c.tag(333, "13 740,4", RED); c.tag(402, "13 680,6", "#111"); c.tag(451, "13 637,8", GREEN);
  [["09:00", 28], ["10:00", 134], ["11:00", 240]].forEach(([s, x]) => c.time(x, s));
}

// ---- B: fifteen-minute chart
{
  const c = makeChart("chart-b", { left: -44, top: 577, right: 315, bottom: 1011, edge: 366, split: 975 });
  const f = frame(0, 500, 3, 2.703);
  const lv = (x1, x2, y, k, w, d) => c.level(Math.round(x1 / 3), Math.round(x2 / 3), f.y(y), k, w, d);
  rows(`262 882 882 1228 1228 b;301 819 882 882 921 d;340 862 874 880 986 b;379 649 660 869 970 b;418 451 660 688 868 r;457 652 685 993 993 r;496 988 990 1072 1148 r`)
    .forEach(([x, h, t, b, l, k]) => c.candle(f.x(+x), f.y(+h), f.y(+t), f.y(+b) - 1, f.y(+l), k, 11));
  lv(262, 946, 784, RED, 2); lv(-132, 946, 1049, BLACK, 1); lv(262, 946, 1054, RED, 2); lv(262, 946, 1247, RED, 1);
  [[268, RED], [462, RED], [1041, GREEN]].forEach(([y, k]) => lv(418, 573, y, k, 2, "21 9"));
  [[366, RED], [655, RED], [945, GREEN], [1234, GREEN]].forEach(([y, k]) => lv(418, 573, y, k, 1, "5 3"));
  lv(418, 573, 846, BLACK, 2); lv(262, 415, 1162, RED, 2, "21 9"); lv(262, 415, 1240, RED, 2, "21 9"); lv(262, 417, 1204, RED, 1, "5 3"); lv(106, 260, 1224, RED, 2, "21 9");
  c.line(points(f, "262,1282 301,1208 340,1188 418,978 460,972 496,972"), PEACH, 1);
  c.line(points(f, "280,1284 301,1267 340,1267 379,1170 418,1083 496,1083"), KIJUN, 2);
  el(c.g, "path", { d: "M131 749l5 5-5 5z", fill: "#19a019" });
  c.mark("upg", 139, 831, "2"); c.mark("downr", 155, 925); c.mark("upg", 161, 924); c.label(158, 939, "4", "#333", "middle");
  [["R2 1h", 596, RED], ["mR2 1h", 632, RED], ["R1 1h", 668, RED], ["mR1 1h", 739, RED], ["Piv 1h", 810, "#111"], ["mS1 1h", 846, GREEN], ["S1 1h", 882, GREEN], ["mS2 1h", 953, GREEN]].forEach(([s, y, k]) => c.label(185, y, s, k));
  [["R3 J", 787], ["R2 J", 887], ["R1 J", 958]].forEach(([s, y]) => c.label(309, y, s, RED));
  [[262, 1355, "g"], [301, 1369, "g"], [340, 1372, "g"], [379, 1358, "g"], [418, 1296, "r"], [457, 1337, "r"], [496, 1328, "r"]].forEach(([x, t, k]) => c.bar(x / 3, (1382 - t) / 2.703, 1011, k, 11));
  c.frameLines();
  [["13 940", 629], ["13 920", 662], ["13 880", 728], ["13 860", 762], ["13 840", 795], ["13 820", 828], ["13 760", 928], ["4 000", 982]].forEach(([s, y]) => c.tick(y, s));
  c.tick(694, "13 900", "bold");
  c.tag(599, "13 957,9", RED); c.tag(635, "13 936,1", RED); c.tag(671, "13 914,4", RED); c.tag(742, "13 871,9", RED); c.tag(790, "13 843,0", RED);
  c.tag(813, "13 829,4", "#111"); c.tag(847, "13 807,6", GREEN); c.tag(861, "13 801,6", PEACH); c.tag(876, "13 789,1", ORANGE); c.tag(884, "13 785,9", GREEN); c.tag(890, "13 783,2", RED);
  c.tag(910, "13 774,7", LIME); c.tag(896, "13 779,6", "#111", "#f8c81c"); c.tag(911, "1m44s", "#111", "#8ee88e", 35);
  c.tag(951, "13 743,4", GREEN); c.tag(966, "13 740,4", RED); c.tag(991, "2 329", "#e06060", null, 30);
  [["21:00", 35], ["09:00", 139], ["10:00", 191], ["11:00", 243], ["12:00", 295]].forEach(([s, x]) => c.time(x, s));
  c.time(87, "2021", true);
}

// Volume per minute, from 08:35 to 09:43
const VOLUME = "11g 6g 14r 6g 6g 6r 6r 6g 4g 6g 11r 6g 11g 6r 6r 11g 6g 9g 6g 6r 9g 48g 28r 25g 51g 193g 90r 50g 56r 107r 59g 45r 28r 39r 28g 56g 22g 26g 22r 14g 51g 31r 28g 34g 23r 28r 23r 25g 28r 34r 34r 37r 20r 31r 25r 87r 48r 51g 31g 31r 54r 45g 37r 40g 26r 26r 17r 34g 6r".split(" ").map((v, i) => [i - 25, parseInt(v), v.slice(-1)]);
const NOTE = ["vente suite a cassure pivot et kumo", "proche des plus haut historiques"];

// ---- C: one-minute chart
{
  const c = makeChart("chart-c", { left: 368, top: 99, right: 1570, bottom: 1011, edge: 1621, split: 934 });
  const hi = frame(365, 0, 2.376, 3), lo = frame(365, 520, 2.376, 2.8), far = frame(1020, 520, 2.45, 2.8), top = frame(1020, 0, 2.57, 2.904);
  const at = i => 565 + 7.695 * i;
  const spanA = [...points(lo, "0,900 7,880 20,797 38,794 56,777 75,742 93,680 111,620 129,573 148,565 165,514 203,514 221,511 239,484 258,480 277,458 293,462 312,320 331,273 348,272 385,250 422,222 440,222 457,250 476,228 495,236 568,238 586,262 623,268 641,286 659,260 678,245 751,245 769,239 823,239 842,258 861,258 878,145 897,145 916,70 928,0"),
    ...points(hi, "951,1245 970,1213 1007,1210 1025,1190 1043,1152 1061,1144 1080,1132 1098,1168 1116,1187 1134,1258 1153,1258 1171,1300 1189,1319 1244,1315 1263,1285 1281,1210 1299,1192 1318,1192 1336,1171 1353,1168 1372,1190 1391,1216 1408,1258 1426,1279 1445,1390 1463,1455 1481,1575"),
    ...points(lo, "1500,175 1518,216 1537,248 1556,266"), ...points(far, "20,281 36,340 56,364 75,376 93,423 111,446 189,446")];
  const spanB = [...points(lo, "0,1090 7,1087 20,1059 56,1056 75,1028 93,988 111,950 129,903 148,893 165,869 422,869 440,863 458,850 476,838 514,838 531,829 550,829 568,805 769,805 787,530 806,377 823,377 843,348 861,335 878,260 897,228 916,130 935,0"),
    ...points(hi, "951,1282 990,1282 1025,1267 1426,1267 1445,1256 1463,1256 1481,1276 1500,1420 1518,1453 1560,1453"), ...points(top, "20,1406 38,1447 198,1447")];
  c.cloud(spanA, spanB, [[843, 899], [963, 1200]]);
  c.level(565, 1027, 182, RED, 2, "21 9"); c.level(565, 1025, 362, RED, 1, "5 3"); c.level(368, 1570, 484, RED, 2);
  c.level(565, 1027, 541, BLACK, 2); c.level(565, 1025, 633, GREEN, 1, "5 3"); c.level(565, 1027, 725, GREEN, 2, "21 9");
  c.level(368, 1570, 733, BLACK, 1); c.level(368, 1570, 736, RED, 2); c.level(368, 565, 838, RED, 2, "21 9"); c.level(368, 565, 913, RED, 2, "21 9");
  c.level(565, 1025, 904, GREEN, 1, "5 3"); c.level(368, 1570, 917, RED, 1);
  rows(`-25 358 373 373 428 d;-24 303 314 369 372 b;-23 283 320 390 402 r;-22 308 331 385 385 b;-21 224 290 338 343 b;-20 282 284 314 364 r;-19 309 321 369 403 r;-18 330 362 368 380 r;-17 265 272 380 380 b;-16 128 130 279 279 b;-15 76 118 237 237 r;-14 171 230 230 237 d;-13 175 214 226 262 b;-12 201 218 218 236 d;-11 218 219 332 338 r;-10 303 326 338 369 b;-9 312 315 332 385 b;-8 220 236 326 349 b;-7 160 197 226 243 b;-6 143 183 226 250 r;-5 160 183 231 250 b;
26 16 135 135 162 d;27 100 144 184 198 r;28 188 189 309 327 r;29 255 315 443 443 r;30 432 438 682 716 r;31 622 687 687 775 d;32 531 605 682 694 b;33 525 580 597 624 b;34 568 586 656 656 r;35 650 651 810 853 r;36 627 651 821 821 b;37 638 645 681 747 r;38 538 555 673 694 b;39 531 550 622 640 r;40 538 628 656 699 r;41 632 662 690 706 r;42 620 642 699 795 b;43 636 648 648 680 d`)
    .forEach(([i, h, t, b, l, k]) => c.candle(at(+i), lo.y(+h), lo.y(+t), lo.y(+b) - 1, lo.y(+l), k, 5));
  rows(`-4 1434 1498 1739 1739 b;-3 1434 1498 1535 1581 r;-2 1263 1305 1528 1528 b;-1 1071 1099 1300 1460 b;0 516 610 1100 1145 b;1 573 643 952 980 r;2 877 895 953 1010 b;3 865 901 1078 1106 r;4 1029 1072 1402 1450 r;5 1191 1294 1414 1467 b;6 1206 1288 1447 1447 r;7 1327 1441 1504 1530 r;8 1455 1492 1516 1683 r;9 1430 1430 1510 1600 b;10 1099 1231 1420 1420 b;11 1135 1213 1219 1240 r;12 1168 1168 1225 1295 b;13 1144 1162 1186 1290 r;14 1135 1168 1174 1219 r;15 1087 1135 1168 1219 b;16 1118 1135 1327 1352 r;17 1201 1213 1306 1346 b;18 1077 1192 1219 1219 b;19 1150 1186 1219 1289 r;20 1150 1213 1231 1289 r;21 1186 1237 1327 1327 r;22 1249 1276 1333 1398 b;23 1276 1282 1465 1478 r;24 1441 1459 1528 1595 r;25 1516 1522 1700 1721 r`)
    .forEach(([i, h, t, b, l, k]) => c.candle(at(+i), hi.y(+h), hi.y(+t), hi.y(+b) - 1, hi.y(+l), k, 5));
  c.line([...points(lo, "0,238 7,238 20,250 38,250 56,262 93,269 111,310 129,326 165,326 184,270 203,239 275,239 293,228 348,232 367,262 385,262 403,133 422,133"), ...points(hi, "455,1560 476,1225 495,1170 531,1168 550,1128 568,1050 605,1020 623,1099 641,1126 659,1273 678,1273 695,1355 714,1390 732,1390 769,1384 787,1340 806,1250 823,1216 861,1216 878,1237 897,1276 916,1330 933,1398 951,1405 970,1462 990,1525"), ...points(lo, "1006,50 1025,213 1043,258 1061,332 1080,368 1098,396 1116,480 1134,520 1153,553 1171,640 1189,690 1226,690 1263,692")], PEACH, 1);
  c.line([...points(lo, "0,222 40,222 75,209 148,209 165,250 348,250 385,254 403,156 422,156 440,60"), ...points(hi, "457,1570 476,1267 495,1255 586,1255 605,1243 769,1243 787,1225 806,1170 842,1168 861,1128 878,1099 915,1099 933,1118 951,1153 970,1320 990,1387 1009,1560"), ...points(lo, "1025,130 1043,163 1098,163 1116,203 1263,203")], KIJUN, 2);
  c.line([...points(hi, "5,660 20,952 39,897 56,1080 75,1402 93,1295 111,1447 129,1504 149,1516 165,1432 184,1231 203,1219 221,1168 239,1186 258,1174 276,1135 293,1327 312,1213 331,1192 348,1219 367,1231 386,1327 403,1276 422,1460 440,1528"), ...points(lo, "458,130 476,135 495,183 514,303 531,442 550,681 568,687 587,603 604,580 623,656 641,810 659,651 678,681 695,555 714,622 732,656 751,692 769,642 787,648")], "#0033cc", 1.5);
  c.mark("upg", 653, 442, "2"); c.mark("xr", 681, 417, "2"); c.mark("downr", 765, 588); c.mark("xg", 804, 807);
  c.note(758, 538, 184, 37, NOTE); c.note(554, 863, 175, 23, ["sortie affinée grace au Heikin asHi"]); c.arrow(804, 765, 697, 855);
  c.callout(716, "13 784,0");
  [["R1 1h", 179, RED], ["mR1 1h", 359, RED], ["Piv 1h", 538, "#111"], ["mS1 1h", 630, GREEN], ["S1 1h", 722, GREEN], ["mS2 1h", 901, GREEN]].forEach(([s, y, k]) => c.label(1022, y, s, k));
  [["R3 J", 481], ["R2 J", 733], ["R1 J", 914]].forEach(([s, y]) => c.label(1565, y, s, RED));
  VOLUME.forEach(([i, v, k]) => c.bar(at(i), v / 2.8, 1011, k, 5));
  c.frameLines(); c.credits();
  const py = p => 243.5 + (13900 - p) * 4.218;
  for (let p = 13930; p > 13740; p -= 10) c.tick(py(p), "13 " + (p - 13000), p % 50 ? "" : "bold");
  [["13 914,4", 182, RED], ["13 871,9", 362, RED], ["13 843,0", 484, RED], ["13 839,6", 498, LIME], ["13 829,4", 541, "#111"], ["13 817,4", 592, KIJUN], ["13 807,6", 633, GREEN], ["13 796,6", 679, ORANGE], ["13 785,9", 722, GREEN], ["13 783,2", 736, RED]].forEach(([s, y, k]) => c.tag(y, s, k));
  c.tag(767, "13 775,9", PEACH); c.tag(751, "13 779,6", "#111", "#f8c81c"); c.tag(766, "44s", "#111", "#8ee88e", 21);
  c.tag(903, "13 743,4", GREEN); c.tag(918, "13 740,4", RED);
  [["800", 947], ["600", 963], ["400", 979], ["200", 995]].forEach(([s, y]) => c.tick(y, s));
  c.tag(1004, "24", "#e06060", null, 15);
  for (let m = -18; m <= 126; m += 6) { const t = 540 + m; c.time(at(m), String(Math.floor(t / 60)).padStart(2, "0") + ":" + String(t % 60).padStart(2, "0"), m % 60 === 0); }
}

// ---- D: Heikin-Ashi chart
{
  const c = makeChart("chart-d", { left: 1770, top: 146, right: 2592, bottom: 934, edge: 2643, split: 868 });
  const f = frame(1760, 150, 3, 3);
  c.cloud(points(f, "30,583 49,559 76,559 103,545 184,520 211,520 238,538 265,523 292,530 400,532 427,547 481,553 508,568 535,547 562,535 670,535 697,532 778,532 805,547 832,547 859,460 886,460 913,400 940,340 967,130 994,109 1048,106 1075,92 1102,65 1129,61 1156,52 1183,79 1210,89 1237,139 1264,139 1291,169 1318,181 1400,178 1427,157 1454,107 1481,94 1508,94 1535,79 1560,76 1587,91 1614,112 1641,137 1669,154 1696,232 1723,277 1750,360 1778,482 1832,539 1886,562 1913,607 1967,634 1994,669 2021,688 2129,688"),
    points(f, "30,1006 184,1006 238,995 265,983 319,982 346,976 373,976 400,958 427,955 697,955 724,750 751,634 778,634 805,615 832,604 859,545 886,523 913,460 940,395 967,157 1021,157 1075,146 1670,146 1696,137 1723,137 1750,151 1777,257 1804,277 1886,278 1913,307 2129,307"), [[2183, 2238], [2312, 2500]]);
  const L = 1770, M = 1848, N = 2388, R = 2592, BIG = "21 9", SMALL = "5 3";
  [[L, R, 242, RED, 2], [M, N, 282, BLACK, 2], [M, N, 346, GREEN, 1, SMALL], [M, N, 411, GREEN, 2, BIG], [L, R, 416, BLACK, 1], [L, R, 419, RED, 2],
   [L, M, 490, RED, 2, BIG], [L, M, 517, RED, 1, SMALL], [M, N, 537, GREEN, 1, SMALL], [L, M, 543, RED, 2, BIG], [L, R, 545, RED, 1], [L, M, 575, RED, 1, SMALL],
   [L, M, 608, RED, 2, BIG], [L, M, 634, RED, 1, SMALL], [L, M, 660, BLACK, 2], [M, N, 662, GREEN, 2, BIG], [L, M, 693, GREEN, 1, SMALL], [L, R, 723, BLACK, 2],
   [L, M, 725, GREEN, 2, BIG], [M, N, 727, GREEN, 1, SMALL], [L, M, 751, GREEN, 1, SMALL], [L, M, 778, GREEN, 2, BIG], [M, N, 791, GREEN, 2, BIG],
   [L, M, 810, GREEN, 1, SMALL], [L, M, 842, GREEN, 2, BIG], [L, R, 849, GREEN, 1], [2240, N, 156, RED, 1, SMALL]].forEach(a => c.level(...a));
  rows(`-8 515 565 587 614 b;-7 471 508 577 577 b;-6 459 502 539 539 b;-5 471 505 523 540 b;-4 261 382 514 514 b;-3 261 319 448 448 b;-2 144 250 382 382 b;-1 -10 121 316 316 b;0 -20 -10 220 220 b;4 -20 -10 127 273 r;5 -20 -10 199 287 r;6 102 115 202 273 r;7 160 160 275 332 r;8 217 217 334 437 r;9 258 275 304 380 r;10 38 166 290 290 b;11 54 100 226 226 b;12 75 109 163 167 b;13 57 97 136 161 b;14 54 82 115 115 b;15 38 67 100 112 b;16 38 82 121 206 r;17 98 103 145 203 r;18 38 85 124 124 b;19 64 104 104 161 d;20 64 106 115 161 r;21 91 109 148 188 r;22 130 130 179 240 r;23 154 154 223 296 r;24 190 190 313 377 r;25 250 250 391 464 r;26 322 322 436 472 r;27 379 379 469 499 r;28 424 424 541 600 r;29 486 486 625 686 r;30 553 553 778 890 r;31 667 667 871 935 r;32 750 769 823 872 r;33 747 790 797 822 b;34 782 794 814 845 r;35 808 808 910 992 r;36 822 856 901 971 r;37 832 862 880 914 b;38 757 814 871 871 b;39 750 794 841 841 b;40 757 817 826 878 r;41 820 820 859 880 r;42 816 838 869 950 r;43 827 841 853 863 b`)
    .forEach(([i, h, t, b, l, k]) => c.candle(1848 + 9 * i, f.y(+h), f.y(+t), f.y(+b) - 1, f.y(+l), k, 7));
  c.line(points(f, "30,526 76,526 103,550 130,550 157,451 184,451 238,330 265,118 292,79 346,76 373,45 400,20 480,20 508,48 535,151 562,151 589,208 616,232 697,229 724,202 751,136 778,109 832,109 859,127 886,154 913,196 940,238 967,244 994,280 1021,330 1048,380 1075,510 1102,548 1129,600 1156,627 1183,650 1210,710 1237,742 1264,768 1291,835 1318,871 1437,871"), PEACH, 1);
  c.line(points(f, "30,539 130,542 157,469 184,469 238,340 265,145 292,137 427,135 454,130 697,130 724,118 751,79 805,76 832,50 860,25 930,25 967,67 994,180 1021,230 1048,335 1075,455 1102,475 1183,476 1210,502 1437,502"), KIJUN, 2);
  c.line(points(f, "30,105 49,95 76,112 103,121 130,186 157,152 184,290 211,330 238,450 265,454 292,490 319,583 346,684 373,862 400,868 427,808 454,787 481,844 508,961 535,842 562,862 589,770 616,820 643,846 670,871 697,836 725,838"), "#0033cc", 1.5);
  c.mark("upg", 1951, 236, "2"); c.mark("xr", 1983, 199, "2"); c.mark("downr", 2082, 319); c.mark("xg", 2127, 472);
  el(c.g, "path", { d: "M1990 169v8l-5-4zM2089 298v8l-5-4z", fill: "#e33" }); el(c.g, "path", { d: "M2121 428v8l5-4z", fill: "#19a019" });
  c.note(2089, 274, 184, 37, NOTE); c.note(1850, 504, 175, 23, ["sortie affinée grace au Heikin asHi"]); c.arrow(2127, 440, 2002, 502);
  c.callout(398, "13 784,0");
  [["mR1 1h", 153, RED], ["Piv 1h", 279, "#111"], ["mS1 1h", 343, GREEN], ["S1 1h", 408, GREEN], ["mS2 1h", 534, GREEN], ["S2 1h", 659, GREEN], ["S3 1h", 788, GREEN]].forEach(([s, y, k]) => c.label(2383, y, s, k));
  [["R3 J", 239, RED], ["R2 J", 416, RED], ["R1 J", 542, RED], ["Piv J", 720, "#111"], ["S1 J", 846, GREEN]].forEach(([s, y, k]) => c.label(2587, y, s, k));
  VOLUME.filter(v => v[0] >= -8).forEach(([i, v, k]) => c.bar(1848 + 9 * i, v / 3.27, 934, k, 7));
  c.frameLines(); c.credits();
  const py = p => 191.3 + (13860 - p) * 2.962;
  for (let p = 13860; p >= 13640; p -= 20) c.tick(py(p), "13 " + (p - 13000), p % 100 ? "" : "bold");
  [["13 871,9", 156, RED], ["13 843,0", 240, RED], ["13 839,6", 254, LIME], ["13 829,4", 282, "#111"], ["13 817,4", 317, KIJUN], ["13 807,6", 346, GREEN], ["13 796,6", 379, ORANGE], ["13 785,9", 408, GREEN], ["13 783,2", 418, RED], ["13 775,9", 447, PEACH], ["13 779,2", 430, "#111"], ["13 743,4", 535, GREEN], ["13 740,4", 548, RED], ["13 700,9", 662, GREEN], ["13 678,1", 733, GREEN], ["13 680,6", 719, "#111"], ["13 657,4", 791, GREEN], ["13 637,8", 849, GREEN]].forEach(([s, y, k]) => c.tag(y, s, k));
  c.tag(446, "44s", "#111", "#8ee88e", 21); c.tag(526, "13 747,0", "#111", "#f4f41c");
  c.tick(900, "500"); c.tag(926, "24", "#e06060", null, 15);
  for (let m = -5; m <= 80; m += 5) { if (m === 35) continue; const t = 540 + m; c.time(1848 + 9 * m, String(Math.floor(t / 60)).padStart(2, "0") + ":" + String(t % 60).padStart(2, "0"), m % 60 === 0); }
  c.time(2163, "09:35");
  el(c.svg, "rect", { x: 2053.5, y: 938.5, width: 112, height: 13, fill: "#ffff20", stroke: "#444" });
  c.label(2109, 949, "lun. 4 janv. 2021 09:29", "#111", "middle", "normal", c.svg);
}
```
